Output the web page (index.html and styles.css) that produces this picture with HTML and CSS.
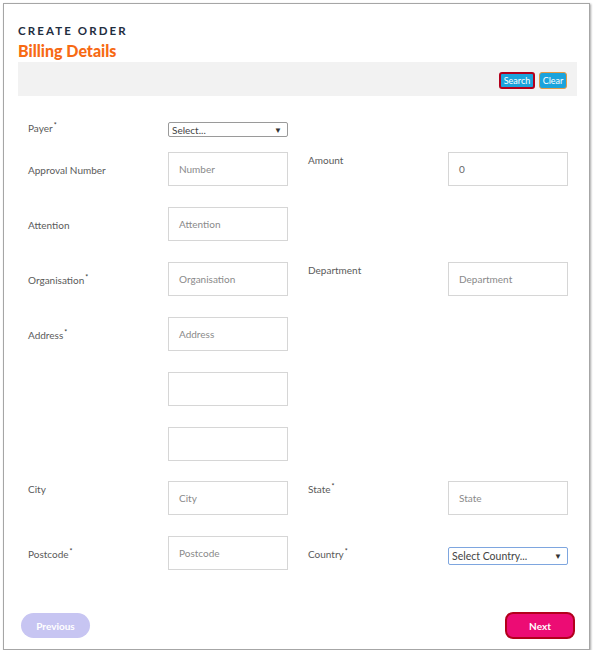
FILE: index.html
```html
<!DOCTYPE html>
<html>
<head>
<meta charset="utf-8">
<link rel="stylesheet" href="styles.css">
</head>
<body>
<div class="frame">
  <div class="eyebrow">CREATE ORDER</div>
  <h1 class="title">Billing Details</h1>
  <div class="toolbar">
    <button class="tbtn search">Search</button>
    <button class="tbtn clear">Clear</button>
  </div>

  <div class="form">
    <div class="row row-payer">
      <div class="label top0">Payer<sup>*</sup></div>
      <div class="select payer"><span>Select...</span><span class="arrow">&#9660;</span></div>
    </div>

    <div class="row">
      <div class="label mid">Approval Number</div>
      <div class="input">Number</div>
      <div class="label top">Amount</div>
      <div class="input value">0</div>
    </div>

    <div class="row">
      <div class="label mid">Attention</div>
      <div class="input">Attention</div>
    </div>

    <div class="row">
      <div class="label mid">Organisation<sup>*</sup></div>
      <div class="input">Organisation</div>
      <div class="label top">Department</div>
      <div class="input">Department</div>
    </div>

    <div class="row">
      <div class="label mid">Address<sup>*</sup></div>
      <div class="input">Address</div>
    </div>

    <div class="row">
      <div class="label"></div>
      <div class="input"></div>
    </div>

    <div class="row">
      <div class="label"></div>
      <div class="input"></div>
    </div>

    <div class="row row-tight">
      <div class="label top">City</div>
      <div class="input">City</div>
      <div class="label top">State<sup>*</sup></div>
      <div class="input">State</div>
    </div>

    <div class="row">
      <div class="label mid">Postcode<sup>*</sup></div>
      <div class="input">Postcode</div>
      <div class="label mid">Country<sup>*</sup></div>
      <div class="cell-select"><div class="select country"><span>Select Country...</span><span class="arrow">&#9660;</span></div></div>
    </div>
  </div>

  <div class="footer">
    <button class="prev">Previous</button>
    <button class="next">Next</button>
  </div>
</div>
</body>
</html>
```

FILE: styles.css
```css
* { box-sizing: border-box; }
html, body { margin: 0; padding: 0; background: #ffffff; }
body { font-family: "Lato", "Open Sans", sans-serif; color: #555; }

.frame {
  margin: 3px 0 0 3px;
  width: 587px;
  height: 647px;
  border: 1px solid #a6a6a6;
  box-shadow: 1px 1px 2px rgba(0,0,0,0.35);
  padding: 20px 12px 0 14px;
  display: flex;
  flex-direction: column;
}

.eyebrow {
  font-size: 11.5px;
  line-height: 14px;
  font-weight: 700;
  letter-spacing: 2.1px;
  color: #1f2e3f;
}

.title {
  margin: 4px 0 2px 0;
  font-size: 16px;
  line-height: 18px;
  font-weight: 900;
  color: #f76a14;
}

.toolbar {
  height: 34px;
  background: #f2f2f2;
  display: flex;
  justify-content: flex-end;
  align-items: center;
  gap: 4px;
  padding: 2px 10px 0 0;
}

.tbtn {
  font-family: inherit;
  font-size: 9px;
  color: #fff;
  background: #1ba3dc;
  height: 17px;
  padding: 0;
  border-radius: 3px;
  cursor: pointer;
}
.tbtn.search { width: 36px; border: 2px solid #b3001c; }
.tbtn.clear { width: 28px; border: 1px solid #e39a45; }

.form {
  padding: 26px 0 0 10px;
  display: flex;
  flex-direction: column;
  gap: 21px;
}
.form .row-payer { margin-bottom: -6px; }
.form .row-tight { margin-top: -1px; }

.row {
  display: grid;
  grid-template-columns: 140px 140px 140px 120px;
  align-items: start;
  min-height: 34px;
}
.row-payer { min-height: 15px; }

.label {
  font-size: 10px;
  line-height: 12px;
  color: #5a5a5a;
}
.label sup { font-size: 7px; line-height: 0; vertical-align: 4px; margin-left: 1px; color: #333; }
.label.top0 { padding-top: 0; }
.label.top { padding-top: 2px; }
.label.mid { padding-top: 12px; }

.input {
  width: 120px;
  height: 34px;
  border: 1px solid #d6d6d6;
  font-size: 10px;
  line-height: 32px;
  color: #8a8a8a;
  padding-left: 10px;
}
.input.value { color: #666; }

.select {
  width: 120px;
  display: flex;
  justify-content: space-between;
  align-items: center;
  font-size: 10px;
  color: #444;
  background: #fff;
  padding: 0 5px 0 3px;
  border-radius: 2px;
}
.select .arrow { font-size: 8px; color: #333; }
.select.payer { height: 15px; border: 1px solid #9a9a9a; }
.cell-select { padding-top: 11px; }
.select.country { height: 18px; border: 1px solid #7ea6df; font-size: 10.5px; }

.footer {
  margin-top: auto;
  margin-bottom: 10px;
  display: flex;
  justify-content: space-between;
  align-items: center;
  padding: 0 2px 0 3px;
}
.prev, .next {
  font-family: inherit;
  font-size: 10px;
  font-weight: 700;
  color: #fff;
  cursor: pointer;
  padding: 0;
}
.prev {
  width: 69px;
  height: 25px;
  border: none;
  border-radius: 13px;
  background: #c7c5f2;
}
.next {
  width: 70px;
  height: 27px;
  border: 2px solid #b3001c;
  border-radius: 8px;
  background: #ec0c74;
}
```
